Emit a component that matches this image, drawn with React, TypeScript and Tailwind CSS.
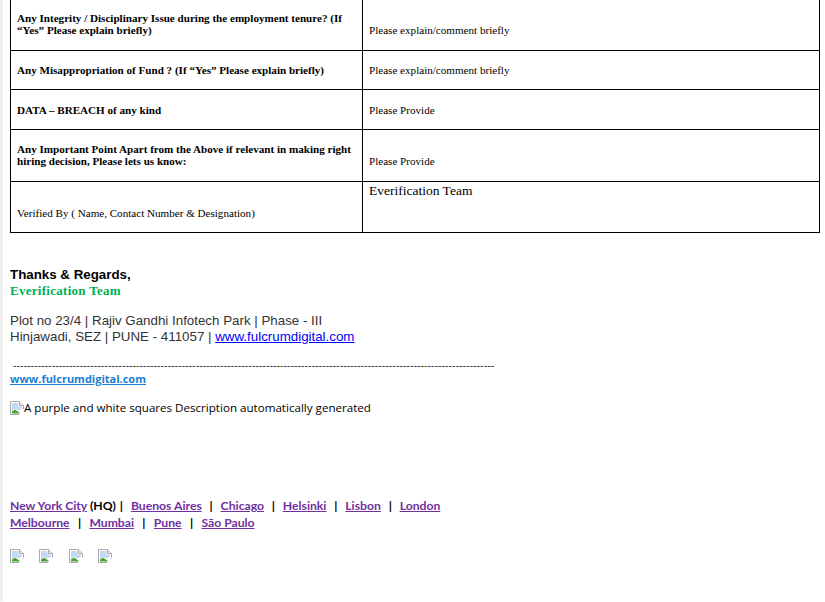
const serif = "font-['Liberation_Serif',serif]";

const rows = [
  { h: "h-[51px]", left: "Any Integrity / Disciplinary Issue during the employment tenure? (If “Yes” Please explain briefly)", leftPad: "pb-[2px]", right: "Please explain/comment briefly", rightPad: "pt-[10px]" },
  { h: "h-[39px]", left: "Any Misappropriation of Fund ? (If “Yes” Please explain briefly)", leftPad: "", right: "Please explain/comment briefly", rightPad: "" },
  { h: "h-[40px]", left: "DATA – BREACH of any kind", leftPad: "", right: "Please Provide", rightPad: "" },
  { h: "h-[52px]", left: "Any Important Point Apart from the Above if relevant in making right hiring decision, Please lets us know:", leftPad: "pb-[2px]", right: "Please Provide", rightPad: "pt-[10px]" },
];

function BrokenImage() {
  return (
    <svg width="14" height="14" viewBox="0 0 14 14" className="shrink-0">
      <path d="M0.5 0.5H9.5L13.5 4.5V13.5H0.5Z" fill="#fff" stroke="#a8a8a8" />
      <path d="M9.5 0.5V4.5H13.5" fill="#ececec" stroke="#a8a8a8" />
      <path d="M2 2H8.5V5.5H12V7.5L8.5 9.5L5 7.5L2 10Z" fill="#c3d8f5" />
      <path d="M2 12.5V10.5L5 8.5L8 10.5L10.5 12.5Z" fill="#4ca535" />
      <path d="M14 8L8.5 14H14Z" fill="#fff" />
    </svg>
  );
}

function CityLink({ children }: { children: string }) {
  return <a className="text-[#7030a0] underline">{children}</a>;
}

const Sep = () => <span className="mx-[7.8px] text-black">|</span>;
const SepWide = () => <span className="mx-[8.3px] text-black">|</span>;

export default function App() {
  return (
    <div className="min-h-[602px] w-[825px] overflow-hidden bg-white">
      <div className="min-h-[602px] border-l-[3px] border-[#efefef] pl-[7px]">
        <table className={`-mt-[1px] w-[810px] table-fixed border-collapse text-[11.1px] leading-[12px] text-black ${serif}`}>
          <tbody>
            {rows.map((r) => (
              <tr key={r.right + r.h} className={r.h}>
                <td className={`w-[352px] border border-black px-[6px] align-middle font-bold ${r.leftPad}`}>{r.left}</td>
                <td className={`border border-black pl-[6px] align-middle ${r.rightPad}`}>{r.right}</td>
              </tr>
            ))}
            <tr className="h-[51px]">
              <td className="w-[352px] border border-black pt-[12px] pl-[6px] align-middle">Verified By ( Name, Contact Number &amp; Designation)</td>
              <td className="border border-black pt-[1px] pl-[6px] align-top text-[13.5px] leading-[16px]">Everification Team</td>
            </tr>
          </tbody>
        </table>

        <div className="mt-[34px] font-['Liberation_Sans',sans-serif] text-[13.33px] leading-[16px]">
          <p className="font-bold text-black">Thanks &amp; Regards,</p>
          <p className={`text-[13px] font-bold tracking-[0.28px] text-[#00b050] ${serif}`}>Everification Team</p>
          <p className="mt-[14px] text-[#333333]">Plot no 23/4 | Rajiv Gandhi Infotech Park | Phase - III</p>
          <p className="text-[#333333]">
            Hinjawadi, SEZ | PUNE - 411057 | <a className="text-[#0000ff] underline">www.fulcrumdigital.com</a>
          </p>
        </div>

        <p className="mt-[13px] pl-[3px] font-['Liberation_Sans',sans-serif] text-[10.55px] leading-[14px] whitespace-nowrap text-[#333333]">
          {"-".repeat(137)}
        </p>
        <a className="-mt-[1px] block font-['Open_Sans',sans-serif] text-[11px] leading-[16px] font-bold text-[#1a7fd4] underline">www.fulcrumdigital.com</a>

        <div className="mt-[13px] flex items-center font-['Open_Sans',sans-serif] text-[11.6px] leading-[16px] text-black">
          <BrokenImage />
          <span>A purple and white squares Description automatically generated</span>
        </div>

        <div className="mt-[81px] font-['Lato',sans-serif] text-[12.2px] leading-[17px] font-bold">
          <p>
            <CityLink>New York City</CityLink> <span className="text-black">(HQ)</span>
            <span className="mr-[8px] ml-[4px] text-black">|</span>
            <CityLink>Buenos Aires</CityLink>
            <Sep />
            <CityLink>Chicago</CityLink>
            <Sep />
            <CityLink>Helsinki</CityLink>
            <Sep />
            <CityLink>Lisbon</CityLink>
            <Sep />
            <CityLink>London</CityLink>
          </p>
          <p>
            <CityLink>Melbourne</CityLink>
            <SepWide />
            <CityLink>Mumbai</CityLink>
            <SepWide />
            <CityLink>Pune</CityLink>
            <SepWide />
            <CityLink>São Paulo</CityLink>
          </p>
        </div>

        <div className="mt-[18px] flex gap-[15.3px]">
          <BrokenImage />
          <BrokenImage />
          <BrokenImage />
          <BrokenImage />
        </div>
      </div>
    </div>
  );
}
